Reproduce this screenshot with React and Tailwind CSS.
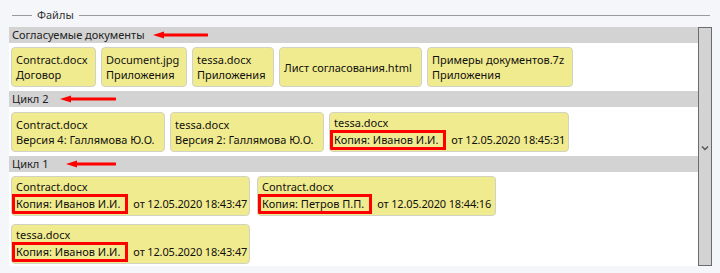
import React from "react";

function Arrow({ w = 55 }) {
  return (
    <svg width={w} height="8" viewBox={`0 0 ${w} 8`}>
      <line x1="8" y1="4" x2={w - 1} y2="4" stroke="#ff0000" strokeWidth="3" strokeLinecap="round" />
      <polygon points={`0,4 11,0.5 11,7.5`} fill="#ff0000" />
    </svg>
  );
}

function Header({ title, tw, aw }) {
  return (
    <div className="h-[16px] bg-[#d3d3d3] flex items-center pl-[3px] text-[11px] leading-[16px] text-[#222]">
      <span className="shrink-0" style={{ width: tw }}>{title}</span>
      <Arrow w={aw} />
    </div>
  );
}

function Card({ w, lines, copy, date }) {
  return (
    <div
      className="h-[40px] shrink-0 rounded-[4px] border border-[#d2d2c4] bg-[#f0eb8e] px-[4px] flex flex-col justify-center text-[11px] leading-[15px] text-[#111] whitespace-nowrap overflow-hidden"
      style={{ width: w }}
    >
      {lines.map((l) => (
        <div key={l}>{l}</div>
      ))}
      {copy && (
        <div className="flex items-center">
          <span className="-ml-[4px] border-[3px] border-[#ff0000] pl-[1px] pr-[5px] leading-[14px]">{copy}</span>
          <span className="ml-[5px] tracking-[-0.15px]">{date}</span>
        </div>
      )}
    </div>
  );
}

export default function App() {
  return (
    <div
      className="w-[720px] h-[273px] bg-[#f5f6fa] overflow-hidden pt-[7px]"
      style={{ fontFamily: '"Noto Sans", "Open Sans", sans-serif' }}
    >
      <div className="flex items-center h-[16px] pl-[12px] pr-[10px]">
        <div className="w-[20px] h-px bg-[#9a9a9a]" />
        <span className="px-[5px] text-[11px] text-[#333]">Файлы</span>
        <div className="flex-1 h-px bg-[#9a9a9a]" />
      </div>
      <div className="ml-[9px] mt-[4px] w-[703px] h-[239px] flex bg-white">
        <div className="flex-1 flex flex-col">
          <Header title="Согласуемые документы" tw={141} aw={55} />
          <div className="flex gap-[5px] pl-[2px] py-[4px]">
            <Card w={85} lines={["Contract.docx", "Договор"]} />
            <Card w={86} lines={["Document.jpg", "Приложения"]} />
            <Card w={82} lines={["tessa.docx", "Приложения"]} />
            <Card w={143} lines={["Лист согласования.html"]} />
            <Card w={146} lines={["Примеры документов.7z", "Приложения"]} />
          </div>
          <Header title="Цикл 2" tw={48} aw={56} />
          <div className="flex gap-[5px] pl-[2px] pt-[5px] pb-[4px]">
            <Card w={154} lines={["Contract.docx", "Версия 4: Галлямова Ю.О."]} />
            <Card w={154} lines={["tessa.docx", "Версия 2: Галлямова Ю.О."]} />
            <Card w={240} lines={["tessa.docx"]} copy="Копия: Иванов И.И." date="от 12.05.2020 18:45:31" />
          </div>
          <Header title="Цикл 1" tw={54} aw={50} />
          <div className="flex flex-wrap w-[500px] gap-x-[7px] gap-y-[8px] pl-[2px] pt-[4px]">
            <Card w={239} lines={["Contract.docx"]} copy="Копия: Иванов И.И." date="от 12.05.2020 18:43:47" />
            <Card w={239} lines={["Contract.docx"]} copy="Копия: Петров П.П." date="от 12.05.2020 18:44:16" />
            <Card w={239} lines={["tessa.docx"]} copy="Копия: Иванов И.И." date="от 12.05.2020 18:43:47" />
          </div>
        </div>
        <div className="w-[14px] h-full border border-[#6b6b6b] bg-[#d3d3d3] flex items-center justify-center">
          <svg width="8" height="6" viewBox="0 0 8 6" className="mt-[3px]">
            <path d="M1 1.5 L4 4.5 L7 1.5" fill="none" stroke="#555" strokeWidth="1.4" />
          </svg>
        </div>
      </div>
    </div>
  );
}
